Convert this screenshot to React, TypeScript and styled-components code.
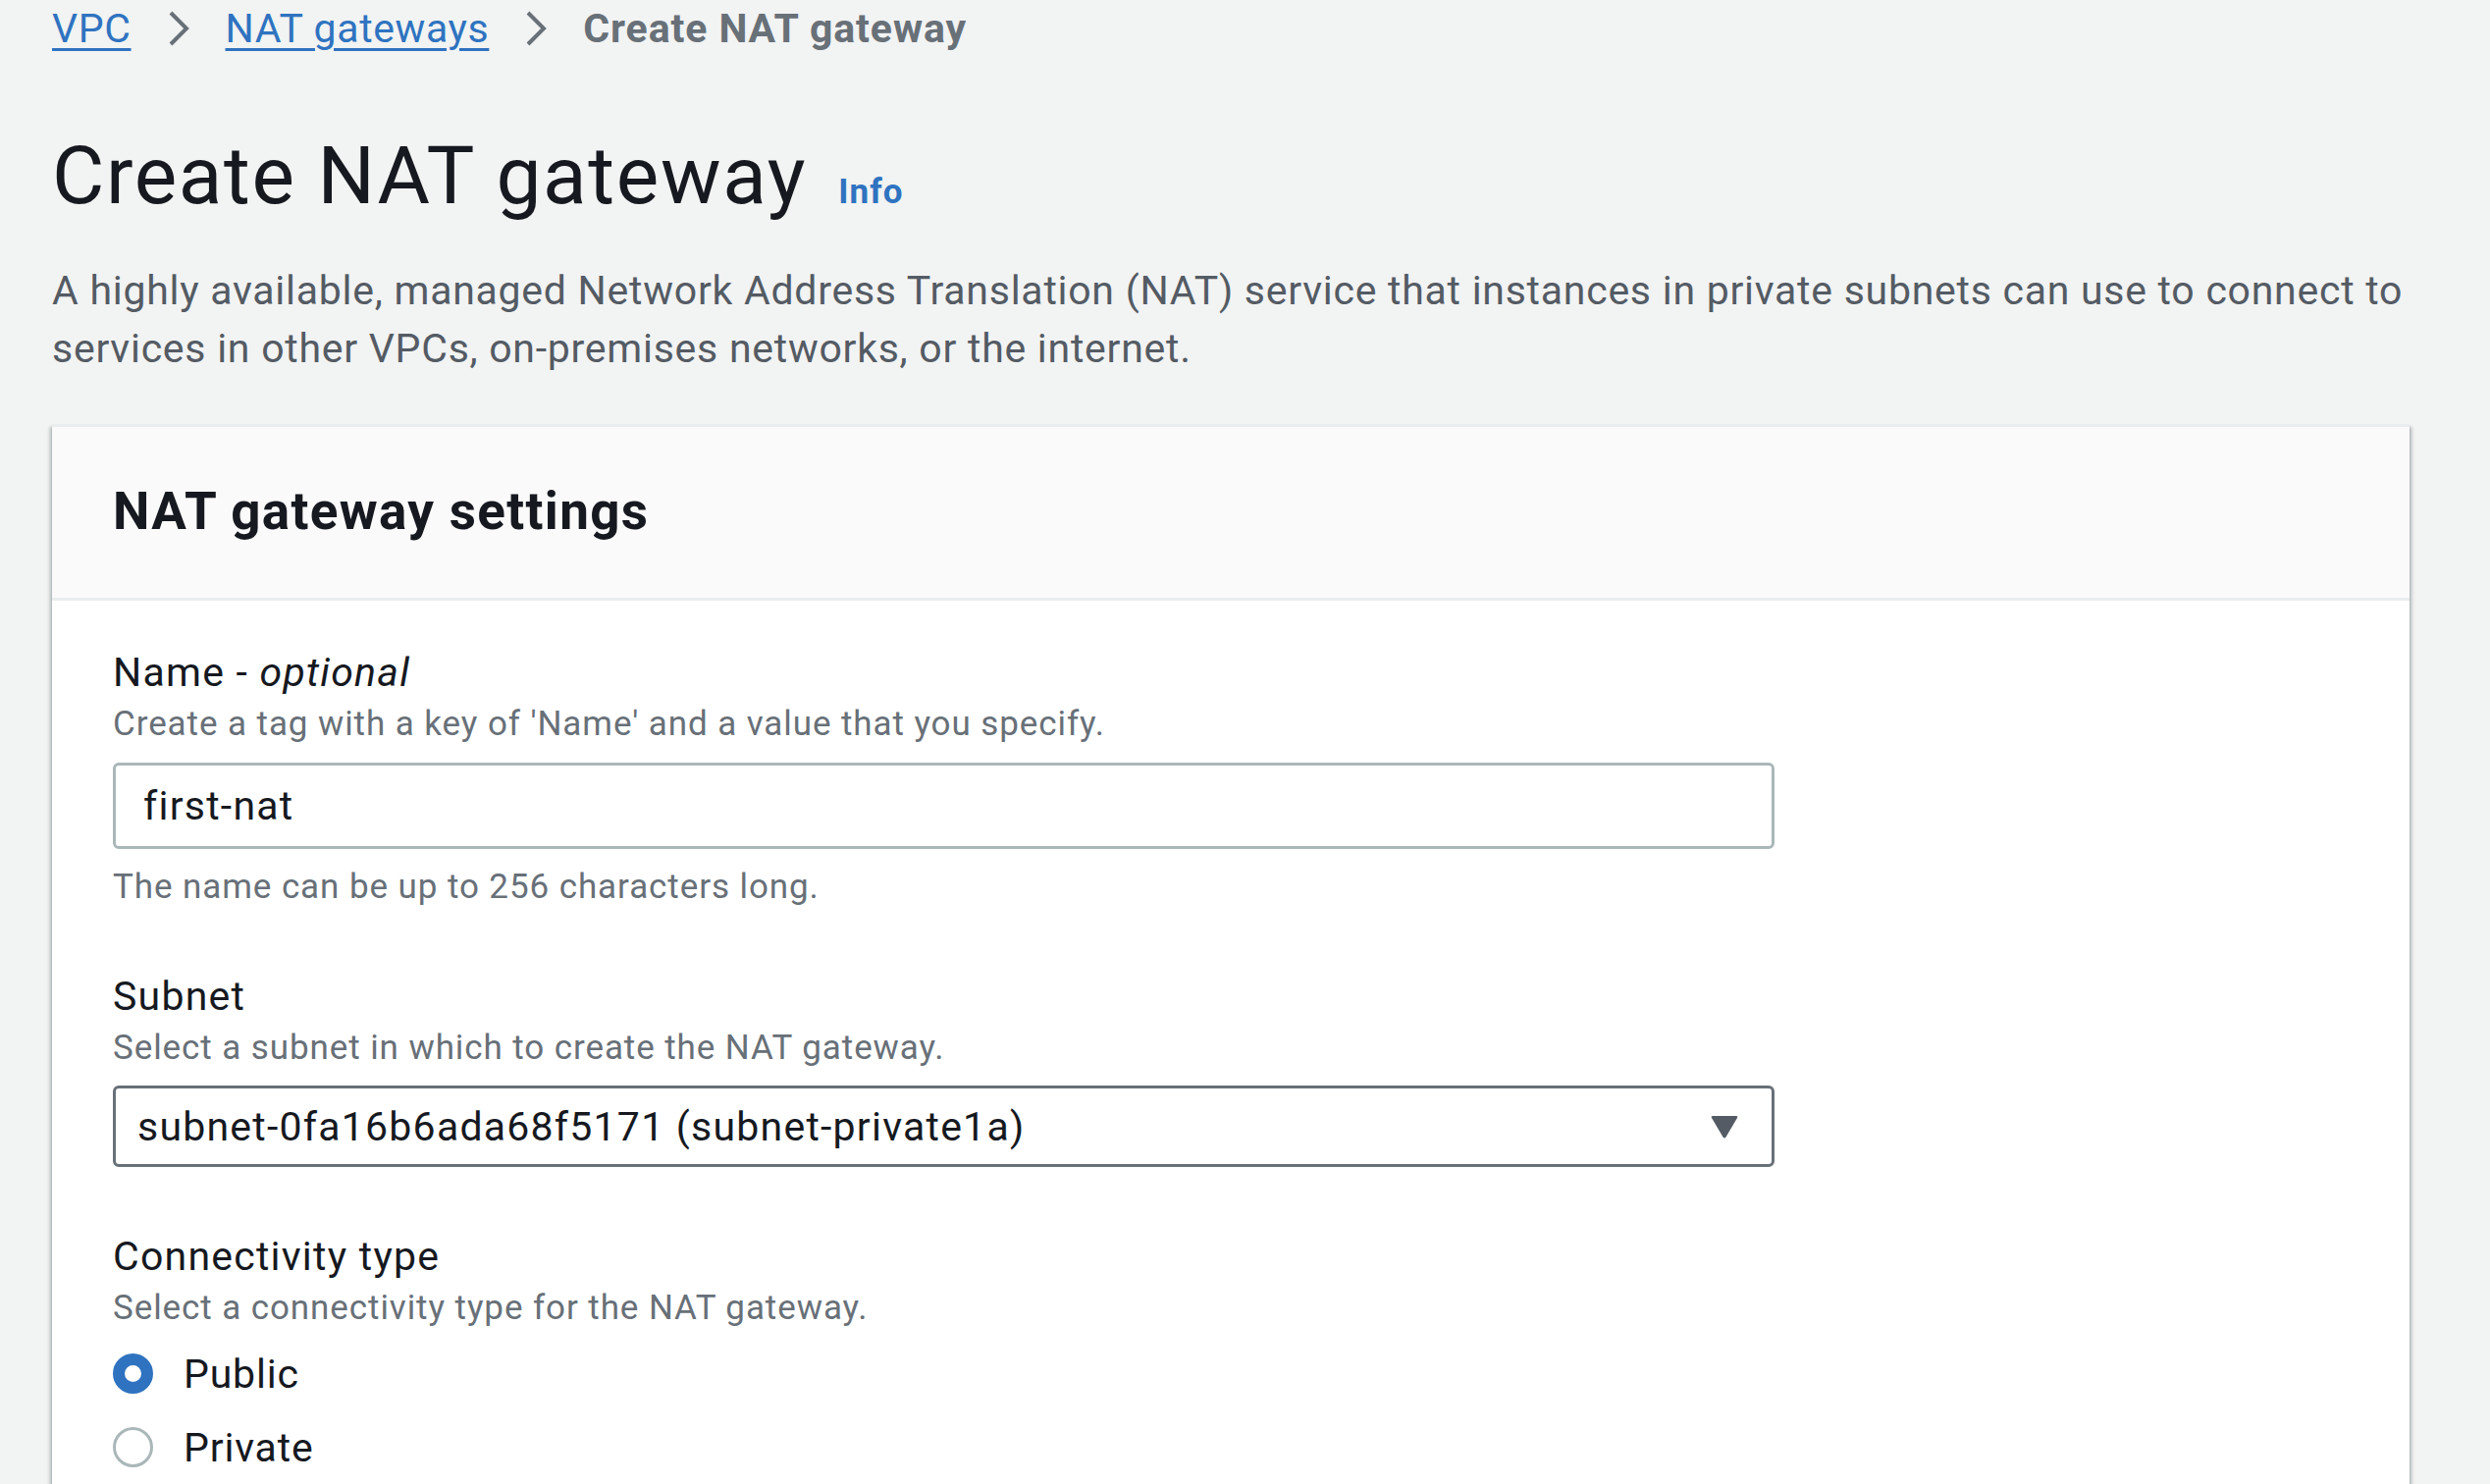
import React from "react";
import styled, { createGlobalStyle } from "styled-components";

const GlobalStyle = createGlobalStyle`
  html, body {
    margin: 0;
    padding: 0;
    background: #f2f3f3;
  }
  body {
    font-family: Roboto, "Liberation Sans", sans-serif;
    color: #16191f;
    -webkit-font-smoothing: antialiased;
  }
`;

const Page = styled.div`
  padding: 0 82px 0 53px;
  min-height: 1512px;
  box-sizing: border-box;
  overflow: hidden;
`;

const Breadcrumbs = styled.nav`
  display: flex;
  align-items: center;
  gap: 36px;
  height: 58px;
  font-size: 41px;
  line-height: 58px;
  letter-spacing: 0.015em;
`;

const Crumb = styled.a`
  color: #2f73c0;
  text-decoration: underline;
  text-decoration-thickness: 3px;
  text-underline-offset: 6px;
`;

const CurrentCrumb = styled.span`
  color: #687078;
  font-weight: 700;
  letter-spacing: 0.022em;
`;

const Chevron = styled.svg`
  width: 24px;
  height: 36px;
  flex: none;
`;

const TitleRow = styled.div`
  display: flex;
  align-items: baseline;
  gap: 32px;
  margin-top: 69px;
`;

const Title = styled.h1`
  margin: 0;
  font-size: 82px;
  line-height: 105px;
  font-weight: 400;
  color: #16191f;
  letter-spacing: 0.02em;
`;

const InfoLink = styled.a`
  color: #2f73c0;
  font-size: 35px;
  font-weight: 700;
  letter-spacing: 0.03em;
  text-decoration: none;
`;

const Description = styled.p`
  margin: 35px 0 0;
  font-size: 41px;
  line-height: 59px;
  color: #545b64;
  letter-spacing: 0.018em;
  max-width: 2440px;
`;

const Card = styled.section`
  margin-top: 47px;
  background: #ffffff;
  border-top: 3px solid #eaeded;
  box-shadow: 0 3px 3px 0 rgba(0, 28, 36, 0.3), 3px 3px 3px 0 rgba(0, 28, 36, 0.15),
    -3px 3px 3px 0 rgba(0, 28, 36, 0.15);
  width: 2402px;
`;

const CardHeader = styled.header`
  background: #fafafa;
  border-bottom: 3px solid #eaeded;
  padding: 54px 62px 56px;
`;

const CardTitle = styled.h2`
  margin: 0;
  font-size: 53px;
  line-height: 64px;
  font-weight: 700;
  color: #16191f;
  letter-spacing: 0.025em;
`;

const CardBody = styled.div`
  padding: 45px 62px 60px;
  display: flex;
  flex-direction: column;
  gap: 60px;
`;

const Field = styled.div<{ $shift?: number }>`
  display: flex;
  flex-direction: column;
  margin-top: ${(p) => p.$shift ?? 0}px;
`;

const Label = styled.label`
  font-size: 41px;
  line-height: 57px;
  color: #16191f;
  letter-spacing: 0.03em;
  em {
    font-style: italic;
  }
`;

const Hint = styled.div<{ $gap?: number }>`
  font-size: 35px;
  line-height: 47px;
  color: #687078;
  letter-spacing: 0.026em;
  margin-top: ${(p) => p.$gap ?? 0}px;
`;

const TextInput = styled.div`
  margin-top: 16px;
  width: 1693px;
  height: 88px;
  box-sizing: border-box;
  border: 3px solid #aab7b8;
  border-radius: 6px;
  background: #fff;
  display: flex;
  align-items: center;
  padding: 0 28px;
  font-size: 41px;
  letter-spacing: 0.03em;
  color: #16191f;
`;

const SelectBox = styled.div`
  margin-top: 15px;
  width: 1693px;
  height: 83px;
  box-sizing: border-box;
  border: 3px solid #687078;
  border-radius: 6px;
  background: #fff;
  display: flex;
  align-items: center;
  justify-content: space-between;
  padding: 0 33px 0 22px;
  font-size: 41px;
  letter-spacing: 0.03em;
  color: #16191f;
`;

const Caret = styled.svg`
  width: 30px;
  height: 26px;
  flex: none;
`;

const RadioGroup = styled.div`
  margin-top: 15px;
  display: flex;
  flex-direction: column;
  gap: 18px;
`;

const RadioRow = styled.div`
  display: flex;
  align-items: center;
  gap: 31px;
  height: 57px;
  font-size: 41px;
  letter-spacing: 0.02em;
  color: #16191f;
`;

const RadioDot = styled.span<{ $checked?: boolean }>`
  width: 41px;
  height: 41px;
  box-sizing: border-box;
  border-radius: 50%;
  flex: none;
  background: #fff;
  border: ${(p) => (p.$checked ? "12px solid #2f73c0" : "3px solid #aab7b8")};
`;

export default function App() {
  return (
    <>
      <GlobalStyle />
      <Page>
        <Breadcrumbs>
          <Crumb href="#">VPC</Crumb>
          <Chevron viewBox="0 0 24 36">
            <path d="M4 2 L20 18 L4 34" fill="none" stroke="#687078" strokeWidth="4" />
          </Chevron>
          <Crumb href="#">NAT gateways</Crumb>
          <Chevron viewBox="0 0 24 36">
            <path d="M4 2 L20 18 L4 34" fill="none" stroke="#687078" strokeWidth="4" />
          </Chevron>
          <CurrentCrumb>Create NAT gateway</CurrentCrumb>
        </Breadcrumbs>

        <TitleRow>
          <Title>Create NAT gateway</Title>
          <InfoLink href="#">Info</InfoLink>
        </TitleRow>

        <Description>
          A highly available, managed Network Address Translation (NAT) service that instances in
          private subnets can use to connect to services in other VPCs, on-premises networks, or the
          internet.
        </Description>

        <Card>
          <CardHeader>
            <CardTitle>NAT gateway settings</CardTitle>
          </CardHeader>
          <CardBody>
            <Field>
              <Label>
                Name - <em>optional</em>
              </Label>
              <Hint>Create a tag with a key of 'Name' and a value that you specify.</Hint>
              <TextInput>first-nat</TextInput>
              <Hint $gap={15}>The name can be up to 256 characters long.</Hint>
            </Field>

            <Field>
              <Label>Subnet</Label>
              <Hint>Select a subnet in which to create the NAT gateway.</Hint>
              <SelectBox>
                <span>subnet-0fa16b6ada68f5171 (subnet-private1a)</span>
                <Caret viewBox="0 0 30 26">
                  <path
                    d="M3 2 H27 Q29 2 28 4 L16.5 23.5 Q15 25.5 13.5 23.5 L2 4 Q1 2 3 2 Z"
                    fill="#545b64"
                  />
                </Caret>
              </SelectBox>
            </Field>

            <Field $shift={3}>
              <Label>Connectivity type</Label>
              <Hint>Select a connectivity type for the NAT gateway.</Hint>
              <RadioGroup>
                <RadioRow>
                  <RadioDot $checked />
                  Public
                </RadioRow>
                <RadioRow>
                  <RadioDot />
                  Private
                </RadioRow>
              </RadioGroup>
            </Field>
          </CardBody>
        </Card>
      </Page>
    </>
  );
}
